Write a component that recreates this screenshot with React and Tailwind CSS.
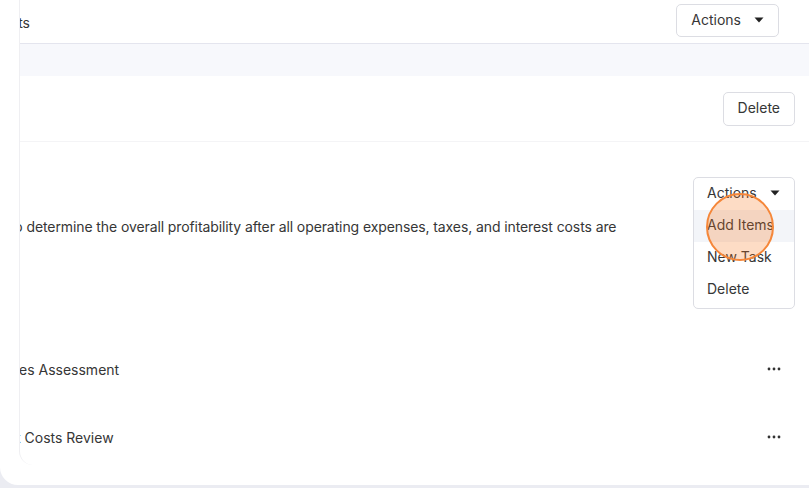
import React from 'react';

const font = { fontFamily: 'Inter, "Noto Sans", sans-serif' };

function Caret() {
    return (
        <svg width="10" height="6" viewBox="0 0 10 6" className="ml-[13px] mt-[1px]">
            <path d="M0.5 0.5 L9.5 0.5 L5 5.5 Z" fill="#222" />
        </svg>
    );
}

function Dots() {
    return (
        <svg width="14" height="4" viewBox="0 0 14 4">
            <circle cx="2" cy="2" r="1.4" fill="#333" />
            <circle cx="7" cy="2" r="1.4" fill="#333" />
            <circle cx="12" cy="2" r="1.4" fill="#333" />
        </svg>
    );
}

export default function App() {
    return (
        <div className="w-[809px] h-[488px] bg-[#ebecf2] overflow-hidden text-[#363636] text-[14px]" style={font}>
            <div className="h-[485px] bg-white rounded-bl-[18px] overflow-hidden pb-[20px]">
                <div className="ml-[19px] h-full border-l border-[#efeff2] rounded-bl-[14px] overflow-hidden">
                    {/* header */}
                    <div className="h-[44px] border-b border-[#e4e5ee] flex items-start justify-between pr-[30px]">
                        <div className="w-[10px] mt-[12px] overflow-hidden flex justify-end whitespace-nowrap">
                            <span>Accounts</span>
                        </div>
                        <button className="mt-[4px] h-[33px] px-[14px] pb-[3px] flex items-center border border-[#dcdde3] rounded-[5px] bg-white">
                            Actions
                            <Caret />
                        </button>
                    </div>

                    {/* sub header band */}
                    <div className="h-[32px] bg-[#f7f8fc]" />

                    {/* row with delete */}
                    <div className="h-[66px] border-b border-[#f4f4f6] flex items-start justify-end pr-[14px] pt-[16px]">
                        <button className="h-[34px] px-[14px] pb-[3px] border border-[#dcdde3] rounded-[5px] bg-white">
                            Delete
                        </button>
                    </div>

                    {/* description row */}
                    <div className="h-[192px] flex items-start justify-between pr-[14px] pt-[35px]">
                        <p className="-ml-[10px] mt-[39px] whitespace-nowrap tracking-[-0.1px]">
                            to determine the overall profitability after all operating expenses, taxes, and interest costs are
                        </p>
                        <div className="relative w-[102px] border border-[#dcdde3] rounded-[5px] bg-white shrink-0">
                            <div className="h-[32px] px-[13px] pb-[3px] flex items-center">
                                Actions
                                <Caret />
                            </div>
                            <div className="h-[32px] px-[13px] pb-[3px] flex items-center bg-[#f3f5f9]">Add Items</div>
                            <div className="h-[32px] px-[13px] pb-[3px] flex items-center">New Task</div>
                            <div className="h-[32px] px-[13px] pb-[3px] flex items-center mb-[2px]">Delete</div>
                            {/* click highlight */}
                            <div className="absolute left-[12px] top-[15px] w-[68px] h-[68px] rounded-full border-2 border-[#f5873a] bg-[#f97316]/25" />
                        </div>
                    </div>

                    {/* list rows */}
                    <div className="h-[68px] pt-[2px] flex items-center justify-between pr-[28px]">
                        <span className="-ml-[1px] whitespace-nowrap">es Assessment</span>
                        <Dots />
                    </div>
                    <div className="h-[68px] pt-[2px] flex items-center justify-between pr-[28px]">
                        <span className="-ml-[4px] whitespace-nowrap">t Costs Review</span>
                        <Dots />
                    </div>
                </div>
            </div>
        </div>
    );
}
